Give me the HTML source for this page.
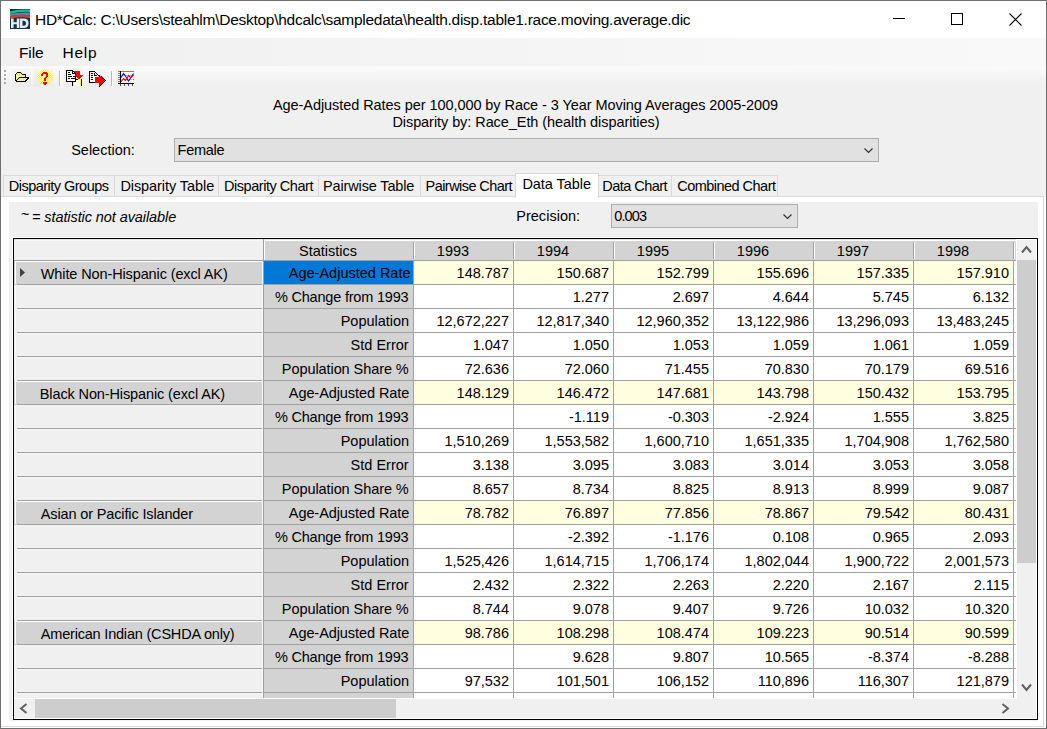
<!DOCTYPE html>
<html><head><meta charset="utf-8"><style>
html,body{margin:0;padding:0;width:1047px;height:729px;overflow:hidden;background:#fff}
div{position:absolute}
.t{font-family:'Liberation Sans',sans-serif;white-space:pre;color:#000}
</style></head><body>
<div style="left:0px;top:0px;width:1047px;height:729px;background:#6e6e6e"></div>
<div style="left:1px;top:1px;width:1045px;height:727px;background:#fff"></div>
<svg style="position:absolute;left:10px;top:9px" width="20" height="20" viewBox="0 0 20 20">
<rect x="0" y="0" width="20" height="20" fill="#0e3350"/>
<path d="M0 2.5 Q9 -0.5 20 0.8 L20 3 Q10 2.2 0 5Z" fill="#1fbf8a"/>
<path d="M0 5 Q10 2.8 20 3.6 L20 6.2 Q10 5.2 0 7.2Z" fill="#4d8fc4"/>
<path d="M0 6.8 Q7 5.8 14 5.6 L20 6.6 L20 9.2 L14 8.2 Q7 8.2 0 9.4Z" fill="#c8442c"/>
<path d="M1 9.5 H3.6 V13.2 H6.8 V9.5 H9.4 V19 H6.8 V15.3 H3.6 V19 H1Z" fill="#e6eaee"/>
<path d="M10 9.5 H14 Q18.6 9.5 18.6 14.25 Q18.6 19 14 19 H10Z M12.5 11.7 V16.8 H13.8 Q16.1 16.8 16.1 14.25 Q16.1 11.7 13.8 11.7Z" fill="#e6eaee" fill-rule="evenodd"/>
</svg>
<div class="t" style="left:35.00px;top:12px;font-size:15.5px;line-height:16px;letter-spacing:-0.269px;">HD*Calc: C:\Users\steahlm\Desktop\hdcalc\sampledata\health.disp.table1.race.moving.average.dic</div>
<div style="left:893px;top:18px;width:12px;height:1px;background:#000"></div>
<div style="left:951px;top:13px;width:12px;height:12px;border:1px solid #000;box-sizing:border-box"></div>
<svg style="position:absolute;left:1009px;top:13px" width="14" height="14" viewBox="0 0 14 14"><path d="M0.5 0.5L12.5 12.5M12.5 0.5L0.5 12.5" stroke="#000" stroke-width="1.1"/></svg>
<div style="left:1px;top:38px;width:1045px;height:28px;background:linear-gradient(to right,#f0f0f0,#f9f9f9)"></div>
<div class="t" style="left:19.00px;top:45px;font-size:15.5px;line-height:16px;letter-spacing:-0.100px;">File</div>
<div class="t" style="left:62.60px;top:45px;font-size:15.5px;line-height:16px;letter-spacing:0.700px;">Help</div>
<div style="left:1px;top:66px;width:1045px;height:23px;background:linear-gradient(to bottom,#fbfbfb,#f3f3f3 60%,#efefef)"></div>
<div style="left:4px;top:70px;width:2px;height:2px;background:#a8a8a8"></div>
<div style="left:4px;top:74px;width:2px;height:2px;background:#a8a8a8"></div>
<div style="left:4px;top:78px;width:2px;height:2px;background:#a8a8a8"></div>
<div style="left:4px;top:82px;width:2px;height:2px;background:#a8a8a8"></div>
<div style="left:1px;top:89px;width:1045px;height:108px;background:#f0f0f0"></div>
<div style="left:12px;top:69px;width:19px;height:18px;background:rgba(0,0,0,0.018)"></div>
<div style="left:34px;top:69px;width:19px;height:18px;background:rgba(0,0,0,0.018)"></div>
<div style="left:64px;top:69px;width:19px;height:18px;background:rgba(0,0,0,0.018)"></div>
<div style="left:87px;top:69px;width:19px;height:18px;background:rgba(0,0,0,0.018)"></div>
<div style="left:116px;top:69px;width:19px;height:18px;background:rgba(0,0,0,0.018)"></div>
<div style="left:59px;top:71px;width:1px;height:15px;background:#b9b9b9"></div>
<div style="left:60px;top:71px;width:1px;height:15px;background:#fff"></div>
<div style="left:111px;top:71px;width:1px;height:15px;background:#b9b9b9"></div>
<div style="left:112px;top:71px;width:1px;height:15px;background:#fff"></div>
<svg style="position:absolute;left:14px;top:71px" width="16" height="12" viewBox="0 0 16 12" shape-rendering="crispEdges">
<defs><pattern id="dy" width="2" height="2" patternUnits="userSpaceOnUse"><rect width="2" height="2" fill="#fff"/><rect width="1" height="1" fill="#ff0"/><rect x="1" y="1" width="1" height="1" fill="#ff0"/></pattern></defs>
<rect x="3" y="2" width="4" height="1" fill="url(#dy)"/><rect x="2" y="3" width="6" height="1" fill="url(#dy)"/><rect x="2" y="4" width="9" height="1" fill="url(#dy)"/><rect x="2" y="5" width="9" height="1" fill="url(#dy)"/><rect x="2" y="6" width="3" height="1" fill="url(#dy)"/><rect x="2" y="7" width="2" height="1" fill="url(#dy)"/><rect x="5" y="7" width="8" height="1" fill="url(#dy)"/><rect x="2" y="8" width="1" height="1" fill="url(#dy)"/><rect x="4" y="8" width="8" height="1" fill="url(#dy)"/><rect x="3" y="9" width="8" height="1" fill="url(#dy)"/><rect x="3" y="1" width="4" height="1" fill="#000"/><rect x="2" y="2" width="1" height="1" fill="#000"/><rect x="7" y="2" width="1" height="1" fill="#000"/><rect x="1" y="3" width="1" height="1" fill="#000"/><rect x="8" y="3" width="4" height="1" fill="#000"/><rect x="1" y="4" width="1" height="1" fill="#000"/><rect x="11" y="4" width="1" height="1" fill="#000"/><rect x="1" y="5" width="1" height="1" fill="#000"/><rect x="11" y="5" width="1" height="1" fill="#000"/><rect x="1" y="6" width="1" height="1" fill="#000"/><rect x="5" y="6" width="10" height="1" fill="#000"/><rect x="1" y="7" width="1" height="1" fill="#000"/><rect x="4" y="7" width="1" height="1" fill="#000"/><rect x="13" y="7" width="2" height="1" fill="#000"/><rect x="1" y="8" width="1" height="1" fill="#000"/><rect x="3" y="8" width="1" height="1" fill="#000"/><rect x="12" y="8" width="2" height="1" fill="#000"/><rect x="1" y="9" width="2" height="1" fill="#000"/><rect x="11" y="9" width="2" height="1" fill="#000"/><rect x="2" y="10" width="10" height="1" fill="#000"/>
</svg>
<svg style="position:absolute;left:37px;top:70px" width="16" height="16" viewBox="0 0 16 16" shape-rendering="crispEdges">
<defs><pattern id="dy2" width="2" height="2" patternUnits="userSpaceOnUse"><rect width="2" height="2" fill="#fff"/><rect width="1" height="1" fill="#ff0"/><rect x="1" y="1" width="1" height="1" fill="#ff0"/></pattern></defs>
<path d="M5 0 H11 V1 H13 V3 H15 V5 H16 V10 H15 V12 H13 V14 H11 V15 H5 V14 H3 V12 H1 V10 H0 V5 H1 V3 H3 V1 H5Z" fill="url(#dy2)"/>
<rect x="6" y="2" width="4" height="1" fill="#f00"/><rect x="5" y="3" width="6" height="1" fill="#f00"/><rect x="4" y="4" width="2" height="1" fill="#f00"/><rect x="9" y="4" width="2" height="1" fill="#f00"/><rect x="4" y="5" width="2" height="1" fill="#f00"/><rect x="9" y="5" width="2" height="1" fill="#f00"/><rect x="9" y="6" width="2" height="1" fill="#f00"/><rect x="8" y="7" width="2" height="1" fill="#f00"/><rect x="7" y="8" width="2" height="1" fill="#f00"/><rect x="7" y="9" width="2" height="1" fill="#f00"/><rect x="7" y="10" width="2" height="1" fill="#f00"/><rect x="6" y="12" width="4" height="1" fill="#f00"/><rect x="6" y="13" width="4" height="1" fill="#f00"/><rect x="7" y="14" width="2" height="1" fill="#f00"/>
</svg>
<svg style="position:absolute;left:64px;top:69px" width="20" height="18" viewBox="0 0 20 18" shape-rendering="crispEdges">
<rect x="3" y="2" width="5" height="1" fill="#fff"/><rect x="3" y="3" width="5" height="1" fill="#fff"/><rect x="9" y="3" width="1" height="1" fill="#fff"/><rect x="3" y="4" width="5" height="1" fill="#fff"/><rect x="3" y="5" width="8" height="1" fill="#fff"/><rect x="3" y="6" width="8" height="1" fill="#fff"/><rect x="3" y="7" width="8" height="1" fill="#fff"/><rect x="3" y="8" width="8" height="1" fill="#fff"/><rect x="3" y="9" width="8" height="1" fill="#fff"/><rect x="3" y="10" width="8" height="1" fill="#fff"/><rect x="3" y="11" width="8" height="1" fill="#fff"/><rect x="12" y="11" width="4" height="1" fill="#fff"/><rect x="12" y="12" width="4" height="1" fill="#fff"/><rect x="10" y="13" width="6" height="1" fill="#fff"/><rect x="10" y="14" width="6" height="1" fill="#fff"/><rect x="10" y="15" width="6" height="1" fill="#fff"/><rect x="10" y="16" width="6" height="1" fill="#fff"/><rect x="14" y="10" width="3" height="1" fill="#ff0"/><rect x="16" y="11" width="1" height="1" fill="#ff0"/><rect x="16" y="12" width="1" height="1" fill="#ff0"/><rect x="9" y="13" width="1" height="1" fill="#ff0"/><rect x="16" y="13" width="1" height="1" fill="#ff0"/><rect x="9" y="14" width="1" height="1" fill="#ff0"/><rect x="16" y="14" width="1" height="1" fill="#ff0"/><rect x="9" y="15" width="1" height="1" fill="#ff0"/><rect x="16" y="15" width="1" height="1" fill="#ff0"/><rect x="9" y="16" width="1" height="1" fill="#ff0"/><rect x="16" y="16" width="1" height="1" fill="#ff0"/><rect x="2" y="1" width="7" height="1" fill="#000"/><rect x="2" y="2" width="1" height="1" fill="#000"/><rect x="8" y="2" width="2" height="1" fill="#000"/><rect x="2" y="3" width="1" height="1" fill="#000"/><rect x="4" y="3" width="2" height="1" fill="#000"/><rect x="8" y="3" width="1" height="1" fill="#000"/><rect x="10" y="3" width="1" height="1" fill="#000"/><rect x="2" y="4" width="1" height="1" fill="#000"/><rect x="8" y="4" width="4" height="1" fill="#000"/><rect x="2" y="5" width="1" height="1" fill="#000"/><rect x="4" y="5" width="3" height="1" fill="#000"/><rect x="11" y="5" width="1" height="1" fill="#000"/><rect x="2" y="6" width="1" height="1" fill="#000"/><rect x="11" y="6" width="1" height="1" fill="#000"/><rect x="2" y="7" width="1" height="1" fill="#000"/><rect x="4" y="7" width="4" height="1" fill="#000"/><rect x="9" y="7" width="2" height="1" fill="#000"/><rect x="11" y="7" width="1" height="1" fill="#000"/><rect x="2" y="8" width="1" height="1" fill="#000"/><rect x="11" y="8" width="1" height="1" fill="#000"/><rect x="2" y="9" width="1" height="1" fill="#000"/><rect x="4" y="9" width="2" height="1" fill="#000"/><rect x="7" y="9" width="4" height="1" fill="#000"/><rect x="11" y="9" width="1" height="1" fill="#000"/><rect x="2" y="10" width="1" height="1" fill="#000"/><rect x="11" y="10" width="3" height="1" fill="#000"/><rect x="17" y="10" width="1" height="1" fill="#000"/><rect x="2" y="11" width="1" height="1" fill="#000"/><rect x="11" y="11" width="1" height="1" fill="#000"/><rect x="17" y="11" width="1" height="1" fill="#000"/><rect x="2" y="12" width="10" height="1" fill="#000"/><rect x="17" y="12" width="1" height="1" fill="#000"/><rect x="8" y="13" width="1" height="1" fill="#000"/><rect x="17" y="13" width="1" height="1" fill="#000"/><rect x="8" y="14" width="1" height="1" fill="#000"/><rect x="17" y="14" width="1" height="1" fill="#000"/><rect x="8" y="15" width="1" height="1" fill="#000"/><rect x="17" y="15" width="1" height="1" fill="#000"/><rect x="8" y="16" width="1" height="1" fill="#000"/><rect x="17" y="16" width="1" height="1" fill="#000"/><rect x="10" y="2" width="6" height="1" fill="#f00"/><rect x="11" y="3" width="5" height="1" fill="#f00"/><rect x="12" y="4" width="4" height="1" fill="#f00"/><rect x="12" y="5" width="4" height="1" fill="#f00"/><rect x="11" y="6" width="8" height="1" fill="#f00"/><rect x="12" y="7" width="6" height="1" fill="#f00"/><rect x="13" y="8" width="4" height="1" fill="#f00"/><rect x="14" y="9" width="2" height="1" fill="#f00"/>
</svg>
<svg style="position:absolute;left:87px;top:69px" width="20" height="19" viewBox="0 0 20 19" shape-rendering="crispEdges">
<rect x="3" y="3" width="5" height="1" fill="#fff"/><rect x="3" y="4" width="6" height="1" fill="#fff"/><rect x="3" y="5" width="7" height="1" fill="#fff"/><rect x="3" y="6" width="8" height="1" fill="#fff"/><rect x="3" y="7" width="9" height="1" fill="#fff"/><rect x="3" y="8" width="10" height="1" fill="#fff"/><rect x="3" y="9" width="5" height="1" fill="#fff"/><rect x="3" y="10" width="5" height="1" fill="#fff"/><rect x="3" y="11" width="5" height="1" fill="#fff"/><rect x="3" y="12" width="5" height="1" fill="#fff"/><rect x="2" y="2" width="6" height="1" fill="#000"/><rect x="2" y="3" width="1" height="1" fill="#000"/><rect x="8" y="3" width="1" height="1" fill="#000"/><rect x="2" y="4" width="1" height="1" fill="#000"/><rect x="4" y="4" width="2" height="1" fill="#000"/><rect x="7" y="4" width="1" height="1" fill="#000"/><rect x="9" y="4" width="1" height="1" fill="#000"/><rect x="2" y="5" width="1" height="1" fill="#000"/><rect x="7" y="5" width="1" height="1" fill="#000"/><rect x="10" y="5" width="1" height="1" fill="#000"/><rect x="2" y="6" width="1" height="1" fill="#000"/><rect x="4" y="6" width="2" height="1" fill="#000"/><rect x="7" y="6" width="3" height="1" fill="#000"/><rect x="11" y="6" width="1" height="1" fill="#000"/><rect x="2" y="7" width="1" height="1" fill="#000"/><rect x="12" y="7" width="1" height="1" fill="#000"/><rect x="2" y="8" width="1" height="1" fill="#000"/><rect x="4" y="8" width="2" height="1" fill="#000"/><rect x="2" y="9" width="1" height="1" fill="#000"/><rect x="2" y="10" width="1" height="1" fill="#000"/><rect x="4" y="10" width="2" height="1" fill="#000"/><rect x="2" y="11" width="1" height="1" fill="#000"/><rect x="2" y="12" width="1" height="1" fill="#000"/><rect x="2" y="13" width="6" height="1" fill="#000"/><rect x="13" y="7" width="1" height="1" fill="#f00"/><rect x="8" y="8" width="7" height="1" fill="#f00"/><rect x="8" y="9" width="8" height="1" fill="#f00"/><rect x="8" y="10" width="9" height="1" fill="#f00"/><rect x="8" y="11" width="10" height="1" fill="#f00"/><rect x="8" y="12" width="9" height="1" fill="#f00"/><rect x="8" y="13" width="8" height="1" fill="#f00"/><rect x="12" y="14" width="3" height="1" fill="#f00"/><rect x="12" y="15" width="2" height="1" fill="#f00"/><rect x="12" y="16" width="1" height="1" fill="#f00"/><rect x="12" y="6" width="1" height="1" fill="#000"/><rect x="14" y="7" width="1" height="1" fill="#000"/><rect x="15" y="8" width="1" height="1" fill="#000"/><rect x="16" y="9" width="1" height="1" fill="#000"/><rect x="17" y="10" width="1" height="1" fill="#000"/><rect x="18" y="11" width="1" height="1" fill="#000"/><rect x="17" y="12" width="1" height="1" fill="#000"/><rect x="16" y="13" width="1" height="1" fill="#000"/><rect x="15" y="14" width="1" height="1" fill="#000"/><rect x="14" y="15" width="1" height="1" fill="#000"/><rect x="13" y="16" width="1" height="1" fill="#000"/><rect x="12" y="17" width="1" height="1" fill="#000"/>
</svg>
<svg style="position:absolute;left:116px;top:69px" width="20" height="19" viewBox="116 69 20 19" shape-rendering="crispEdges">
<rect x="118" y="71" width="16" height="1" fill="#808080"/><rect x="118" y="75" width="16" height="1" fill="#808080"/><rect x="118" y="79" width="16" height="1" fill="#808080"/>
<rect x="118" y="73" width="2" height="1" fill="#808080"/><rect x="118" y="77" width="2" height="1" fill="#808080"/><rect x="118" y="81" width="2" height="1" fill="#808080"/>
<rect x="121" y="72" width="12" height="11" fill="#fff" opacity="0.6"/>
<rect x="120" y="71" width="1" height="13" fill="#000"/><rect x="118" y="83" width="16" height="1" fill="#000"/>
<rect x="120" y="84" width="1" height="2" fill="#555"/><rect x="124" y="84" width="1" height="2" fill="#555"/><rect x="128" y="84" width="1" height="2" fill="#555"/><rect x="132" y="84" width="1" height="2" fill="#555"/>
<polyline points="121,77.5 123.5,73.5 126,77 128.5,81 131,77.5 133.5,73.5" fill="none" stroke="#00f" stroke-width="1.1" shape-rendering="auto"/>
<polyline points="121,82 123.5,78.5 125.5,80.5 128.5,75.5 130.5,77.5 133.5,75.5" fill="none" stroke="#f00" stroke-width="1.1" shape-rendering="auto"/>
</svg>
<div class="t" style="left:273.00px;top:97px;font-size:14.5px;line-height:16px;letter-spacing:-0.067px;">Age-Adjusted Rates per 100,000 by Race - 3 Year Moving Averages 2005-2009</div>
<div class="t" style="left:392.40px;top:114px;font-size:14.5px;line-height:16px;letter-spacing:-0.069px;">Disparity by: Race_Eth (health disparities)</div>
<div class="t" style="left:71.20px;top:142px;font-size:14.5px;line-height:16px;letter-spacing:-0.011px;">Selection:</div>
<div style="left:174px;top:138px;width:705px;height:24px;background:#e1e1e1;border:1px solid #adadad;box-sizing:border-box"></div>
<div class="t" style="left:177.60px;top:142px;font-size:14.5px;line-height:16px;letter-spacing:-0.260px;">Female</div>
<svg style="position:absolute;left:864px;top:148px" width="10" height="6" viewBox="0 0 10 6"><polyline points="0.5,0.5 4.5,4.5 8.5,0.5" fill="none" stroke="#333" stroke-width="1.2"/></svg>
<div style="left:3px;top:175px;width:112px;height:22px;background:#f0f0f0;border:1px solid #d9d9d9;box-sizing:border-box"></div>
<div class="t" style="left:8.80px;top:178px;font-size:14.5px;line-height:16px;letter-spacing:-0.520px;">Disparity Groups</div>
<div style="left:114px;top:175px;width:105px;height:22px;background:#f0f0f0;border:1px solid #d9d9d9;box-sizing:border-box"></div>
<div class="t" style="left:120.40px;top:178px;font-size:14.5px;line-height:16px;letter-spacing:-0.071px;">Disparity Table</div>
<div style="left:218px;top:175px;width:101px;height:22px;background:#f0f0f0;border:1px solid #d9d9d9;box-sizing:border-box"></div>
<div class="t" style="left:224.00px;top:178px;font-size:14.5px;line-height:16px;letter-spacing:-0.457px;">Disparity Chart</div>
<div style="left:318px;top:175px;width:103px;height:22px;background:#f0f0f0;border:1px solid #d9d9d9;box-sizing:border-box"></div>
<div class="t" style="left:323.00px;top:178px;font-size:14.5px;line-height:16px;letter-spacing:-0.138px;">Pairwise Table</div>
<div style="left:420px;top:175px;width:97px;height:22px;background:#f0f0f0;border:1px solid #d9d9d9;box-sizing:border-box"></div>
<div class="t" style="left:425.60px;top:178px;font-size:14.5px;line-height:16px;letter-spacing:-0.562px;">Pairwise Chart</div>
<div style="left:598px;top:175px;width:74px;height:22px;background:#f0f0f0;border:1px solid #d9d9d9;box-sizing:border-box"></div>
<div class="t" style="left:602.30px;top:178px;font-size:14.5px;line-height:16px;letter-spacing:-0.544px;">Data Chart</div>
<div style="left:671px;top:175px;width:107px;height:22px;background:#f0f0f0;border:1px solid #d9d9d9;box-sizing:border-box"></div>
<div class="t" style="left:677.20px;top:178px;font-size:14.5px;line-height:16px;letter-spacing:-0.523px;">Combined Chart</div>
<div style="left:1px;top:196px;width:1043px;height:531px;background:#fff;border-right:1px solid #d9d9d9;border-bottom:1px solid #d9d9d9;border-top:1px solid #d9d9d9;box-sizing:border-box"></div>
<div style="left:515px;top:173px;width:84px;height:25px;background:#fff;border:1px solid #d9d9d9;border-bottom:none;box-sizing:border-box"></div>
<div class="t" style="left:522.40px;top:176px;font-size:14.5px;line-height:16px;letter-spacing:-0.056px;">Data Table</div>
<div style="left:9px;top:202px;width:1029px;height:519px;background:#f0f0f0"></div>
<div class="t" style="left:21.00px;top:206px;font-size:14.5px;line-height:16px;letter-spacing:2.000px;">~</div>
<div class="t" style="left:32.00px;top:209px;font-size:14.5px;line-height:16px;letter-spacing:-0.087px;font-style:italic;">= statistic not available</div>
<div class="t" style="left:516.20px;top:208px;font-size:14.5px;line-height:16px;letter-spacing:0.033px;">Precision:</div>
<div style="left:611px;top:204px;width:187px;height:24px;background:#e1e1e1;border:1px solid #adadad;box-sizing:border-box"></div>
<div class="t" style="left:614.20px;top:208px;font-size:14.5px;line-height:16px;letter-spacing:-0.875px;">0.003</div>
<svg style="position:absolute;left:783px;top:214px" width="10" height="6" viewBox="0 0 10 6"><polyline points="0.5,0.5 4.5,4.5 8.5,0.5" fill="none" stroke="#333" stroke-width="1.2"/></svg>
<div style="left:12px;top:237px;width:1026px;height:483px;background:#fff"></div>
<div style="left:13px;top:238px;width:1025px;height:482px;background:#f0f0f0;border:1px solid #000;box-sizing:border-box"></div>
<div style="left:1014px;top:239px;width:2px;height:459px;background:#fff"></div>
<div style="left:14px;top:239px;width:250px;height:22px;background:#f0f0f0"></div>
<div style="left:14px;top:239px;width:249px;height:1px;background:#e6e6e6"></div>
<div style="left:15px;top:240px;width:247px;height:1px;background:#f7f7f7"></div>
<div style="left:264px;top:239px;width:752px;height:22px;background:#d3d3d3"></div>
<div style="left:264px;top:239px;width:752px;height:1px;background:#e6e6e6"></div>
<div style="left:264px;top:240px;width:752px;height:1px;background:#fff"></div>
<div style="left:14px;top:260px;width:1002px;height:1px;background:#a0a0a0"></div>
<div style="left:263px;top:239px;width:1px;height:459px;background:#a0a0a0"></div>
<div style="left:264px;top:240px;width:1px;height:20px;background:#fff"></div>
<div style="left:413px;top:242px;width:1px;height:17px;background:#a0a0a0"></div>
<div style="left:414px;top:242px;width:1px;height:17px;background:#fff"></div>
<div class="t" style="left:28px;width:600px;text-align:center;top:243px;font-size:14.5px;line-height:16px;">Statistics</div>
<div style="left:513px;top:242px;width:1px;height:17px;background:#a0a0a0"></div>
<div style="left:514px;top:242px;width:1px;height:17px;background:#fff"></div>
<div class="t" style="left:153px;width:600px;text-align:center;top:243px;font-size:14.5px;line-height:16px;">1993</div>
<div style="left:613px;top:242px;width:1px;height:17px;background:#a0a0a0"></div>
<div style="left:614px;top:242px;width:1px;height:17px;background:#fff"></div>
<div class="t" style="left:253px;width:600px;text-align:center;top:243px;font-size:14.5px;line-height:16px;">1994</div>
<div style="left:713px;top:242px;width:1px;height:17px;background:#a0a0a0"></div>
<div style="left:714px;top:242px;width:1px;height:17px;background:#fff"></div>
<div class="t" style="left:353px;width:600px;text-align:center;top:243px;font-size:14.5px;line-height:16px;">1995</div>
<div style="left:813px;top:242px;width:1px;height:17px;background:#a0a0a0"></div>
<div style="left:814px;top:242px;width:1px;height:17px;background:#fff"></div>
<div class="t" style="left:453px;width:600px;text-align:center;top:243px;font-size:14.5px;line-height:16px;">1996</div>
<div style="left:913px;top:242px;width:1px;height:17px;background:#a0a0a0"></div>
<div style="left:914px;top:242px;width:1px;height:17px;background:#fff"></div>
<div class="t" style="left:553px;width:600px;text-align:center;top:243px;font-size:14.5px;line-height:16px;">1997</div>
<div style="left:1013px;top:242px;width:1px;height:17px;background:#a0a0a0"></div>
<div style="left:1014px;top:242px;width:1px;height:17px;background:#fff"></div>
<div class="t" style="left:653px;width:600px;text-align:center;top:243px;font-size:14.5px;line-height:16px;">1998</div>
<div style="left:14px;top:261px;width:249px;height:24px;background:#d3d3d3"></div>
<div style="left:15px;top:261px;width:1px;height:23px;background:#fff"></div>
<div style="left:15px;top:261px;width:247px;height:1px;background:#fff"></div>
<div style="left:262px;top:261px;width:1px;height:23px;background:#f7f7f7"></div>
<div style="left:17px;top:284px;width:245px;height:1px;background:#a0a0a0"></div>
<div class="t" style="left:40.80px;top:266px;font-size:14.5px;line-height:16px;letter-spacing:-0.119px;">White Non-Hispanic (excl AK)</div>
<div style="left:264px;top:261px;width:149px;height:23px;background:#0078d7"></div>
<div class="t" style="left:288.80px;top:265px;font-size:14.5px;line-height:16px;color:#fffletter-spacing:-0.075px;">Age-Adjusted Rate</div>
<div style="left:413px;top:261px;width:1px;height:24px;background:#a0a0a0"></div>
<div style="left:414px;top:261px;width:600px;height:24px;background:#ffffe0"></div>
<div style="left:513px;top:261px;width:1px;height:24px;background:#a0a0a0"></div>
<div class="t" style="left:209px;width:300px;text-align:right;top:265px;font-size:14.5px;line-height:16px;">148.787</div>
<div style="left:613px;top:261px;width:1px;height:24px;background:#a0a0a0"></div>
<div class="t" style="left:309px;width:300px;text-align:right;top:265px;font-size:14.5px;line-height:16px;">150.687</div>
<div style="left:713px;top:261px;width:1px;height:24px;background:#a0a0a0"></div>
<div class="t" style="left:409px;width:300px;text-align:right;top:265px;font-size:14.5px;line-height:16px;">152.799</div>
<div style="left:813px;top:261px;width:1px;height:24px;background:#a0a0a0"></div>
<div class="t" style="left:509px;width:300px;text-align:right;top:265px;font-size:14.5px;line-height:16px;">155.696</div>
<div style="left:913px;top:261px;width:1px;height:24px;background:#a0a0a0"></div>
<div class="t" style="left:609px;width:300px;text-align:right;top:265px;font-size:14.5px;line-height:16px;">157.335</div>
<div style="left:1013px;top:261px;width:1px;height:24px;background:#a0a0a0"></div>
<div class="t" style="left:709px;width:300px;text-align:right;top:265px;font-size:14.5px;line-height:16px;">157.910</div>
<div style="left:264px;top:284px;width:752px;height:1px;background:#a0a0a0"></div>
<div style="left:14px;top:285px;width:249px;height:24px;background:#f0f0f0"></div>
<div style="left:15px;top:285px;width:1px;height:23px;background:#f7f7f7"></div>
<div style="left:15px;top:285px;width:247px;height:1px;background:#f7f7f7"></div>
<div style="left:262px;top:285px;width:1px;height:23px;background:#f7f7f7"></div>
<div style="left:17px;top:308px;width:245px;height:1px;background:#a0a0a0"></div>
<div style="left:264px;top:285px;width:149px;height:24px;background:#d3d3d3"></div>
<div class="t" style="left:274.90px;top:289px;font-size:14.5px;line-height:16px;letter-spacing:-0.194px;">% Change from 1993</div>
<div style="left:413px;top:285px;width:1px;height:24px;background:#a0a0a0"></div>
<div style="left:414px;top:285px;width:600px;height:24px;background:#fff"></div>
<div style="left:513px;top:285px;width:1px;height:24px;background:#a0a0a0"></div>
<div style="left:613px;top:285px;width:1px;height:24px;background:#a0a0a0"></div>
<div class="t" style="left:309px;width:300px;text-align:right;top:289px;font-size:14.5px;line-height:16px;">1.277</div>
<div style="left:713px;top:285px;width:1px;height:24px;background:#a0a0a0"></div>
<div class="t" style="left:409px;width:300px;text-align:right;top:289px;font-size:14.5px;line-height:16px;">2.697</div>
<div style="left:813px;top:285px;width:1px;height:24px;background:#a0a0a0"></div>
<div class="t" style="left:509px;width:300px;text-align:right;top:289px;font-size:14.5px;line-height:16px;">4.644</div>
<div style="left:913px;top:285px;width:1px;height:24px;background:#a0a0a0"></div>
<div class="t" style="left:609px;width:300px;text-align:right;top:289px;font-size:14.5px;line-height:16px;">5.745</div>
<div style="left:1013px;top:285px;width:1px;height:24px;background:#a0a0a0"></div>
<div class="t" style="left:709px;width:300px;text-align:right;top:289px;font-size:14.5px;line-height:16px;">6.132</div>
<div style="left:264px;top:308px;width:752px;height:1px;background:#a0a0a0"></div>
<div style="left:14px;top:309px;width:249px;height:24px;background:#f0f0f0"></div>
<div style="left:15px;top:309px;width:1px;height:23px;background:#f7f7f7"></div>
<div style="left:15px;top:309px;width:247px;height:1px;background:#f7f7f7"></div>
<div style="left:262px;top:309px;width:1px;height:23px;background:#f7f7f7"></div>
<div style="left:17px;top:332px;width:245px;height:1px;background:#a0a0a0"></div>
<div style="left:264px;top:309px;width:149px;height:24px;background:#d3d3d3"></div>
<div class="t" style="left:340.70px;top:313px;font-size:14.5px;line-height:16px;letter-spacing:-0.011px;">Population</div>
<div style="left:413px;top:309px;width:1px;height:24px;background:#a0a0a0"></div>
<div style="left:414px;top:309px;width:600px;height:24px;background:#fff"></div>
<div style="left:513px;top:309px;width:1px;height:24px;background:#a0a0a0"></div>
<div class="t" style="left:209px;width:300px;text-align:right;top:313px;font-size:14.5px;line-height:16px;">12,672,227</div>
<div style="left:613px;top:309px;width:1px;height:24px;background:#a0a0a0"></div>
<div class="t" style="left:309px;width:300px;text-align:right;top:313px;font-size:14.5px;line-height:16px;">12,817,340</div>
<div style="left:713px;top:309px;width:1px;height:24px;background:#a0a0a0"></div>
<div class="t" style="left:409px;width:300px;text-align:right;top:313px;font-size:14.5px;line-height:16px;">12,960,352</div>
<div style="left:813px;top:309px;width:1px;height:24px;background:#a0a0a0"></div>
<div class="t" style="left:509px;width:300px;text-align:right;top:313px;font-size:14.5px;line-height:16px;">13,122,986</div>
<div style="left:913px;top:309px;width:1px;height:24px;background:#a0a0a0"></div>
<div class="t" style="left:609px;width:300px;text-align:right;top:313px;font-size:14.5px;line-height:16px;">13,296,093</div>
<div style="left:1013px;top:309px;width:1px;height:24px;background:#a0a0a0"></div>
<div class="t" style="left:709px;width:300px;text-align:right;top:313px;font-size:14.5px;line-height:16px;">13,483,245</div>
<div style="left:264px;top:332px;width:752px;height:1px;background:#a0a0a0"></div>
<div style="left:14px;top:333px;width:249px;height:24px;background:#f0f0f0"></div>
<div style="left:15px;top:333px;width:1px;height:23px;background:#f7f7f7"></div>
<div style="left:15px;top:333px;width:247px;height:1px;background:#f7f7f7"></div>
<div style="left:262px;top:333px;width:1px;height:23px;background:#f7f7f7"></div>
<div style="left:17px;top:356px;width:245px;height:1px;background:#a0a0a0"></div>
<div style="left:264px;top:333px;width:149px;height:24px;background:#d3d3d3"></div>
<div class="t" style="left:350.60px;top:337px;font-size:14.5px;line-height:16px;letter-spacing:0.000px;">Std Error</div>
<div style="left:413px;top:333px;width:1px;height:24px;background:#a0a0a0"></div>
<div style="left:414px;top:333px;width:600px;height:24px;background:#fff"></div>
<div style="left:513px;top:333px;width:1px;height:24px;background:#a0a0a0"></div>
<div class="t" style="left:209px;width:300px;text-align:right;top:337px;font-size:14.5px;line-height:16px;">1.047</div>
<div style="left:613px;top:333px;width:1px;height:24px;background:#a0a0a0"></div>
<div class="t" style="left:309px;width:300px;text-align:right;top:337px;font-size:14.5px;line-height:16px;">1.050</div>
<div style="left:713px;top:333px;width:1px;height:24px;background:#a0a0a0"></div>
<div class="t" style="left:409px;width:300px;text-align:right;top:337px;font-size:14.5px;line-height:16px;">1.053</div>
<div style="left:813px;top:333px;width:1px;height:24px;background:#a0a0a0"></div>
<div class="t" style="left:509px;width:300px;text-align:right;top:337px;font-size:14.5px;line-height:16px;">1.059</div>
<div style="left:913px;top:333px;width:1px;height:24px;background:#a0a0a0"></div>
<div class="t" style="left:609px;width:300px;text-align:right;top:337px;font-size:14.5px;line-height:16px;">1.061</div>
<div style="left:1013px;top:333px;width:1px;height:24px;background:#a0a0a0"></div>
<div class="t" style="left:709px;width:300px;text-align:right;top:337px;font-size:14.5px;line-height:16px;">1.059</div>
<div style="left:264px;top:356px;width:752px;height:1px;background:#a0a0a0"></div>
<div style="left:14px;top:357px;width:249px;height:24px;background:#f0f0f0"></div>
<div style="left:15px;top:357px;width:1px;height:23px;background:#f7f7f7"></div>
<div style="left:15px;top:357px;width:247px;height:1px;background:#f7f7f7"></div>
<div style="left:262px;top:357px;width:1px;height:23px;background:#f7f7f7"></div>
<div style="left:17px;top:380px;width:245px;height:1px;background:#a0a0a0"></div>
<div style="left:264px;top:357px;width:149px;height:24px;background:#d3d3d3"></div>
<div class="t" style="left:281.80px;top:361px;font-size:14.5px;line-height:16px;letter-spacing:-0.071px;">Population Share %</div>
<div style="left:413px;top:357px;width:1px;height:24px;background:#a0a0a0"></div>
<div style="left:414px;top:357px;width:600px;height:24px;background:#fff"></div>
<div style="left:513px;top:357px;width:1px;height:24px;background:#a0a0a0"></div>
<div class="t" style="left:209px;width:300px;text-align:right;top:361px;font-size:14.5px;line-height:16px;">72.636</div>
<div style="left:613px;top:357px;width:1px;height:24px;background:#a0a0a0"></div>
<div class="t" style="left:309px;width:300px;text-align:right;top:361px;font-size:14.5px;line-height:16px;">72.060</div>
<div style="left:713px;top:357px;width:1px;height:24px;background:#a0a0a0"></div>
<div class="t" style="left:409px;width:300px;text-align:right;top:361px;font-size:14.5px;line-height:16px;">71.455</div>
<div style="left:813px;top:357px;width:1px;height:24px;background:#a0a0a0"></div>
<div class="t" style="left:509px;width:300px;text-align:right;top:361px;font-size:14.5px;line-height:16px;">70.830</div>
<div style="left:913px;top:357px;width:1px;height:24px;background:#a0a0a0"></div>
<div class="t" style="left:609px;width:300px;text-align:right;top:361px;font-size:14.5px;line-height:16px;">70.179</div>
<div style="left:1013px;top:357px;width:1px;height:24px;background:#a0a0a0"></div>
<div class="t" style="left:709px;width:300px;text-align:right;top:361px;font-size:14.5px;line-height:16px;">69.516</div>
<div style="left:264px;top:380px;width:752px;height:1px;background:#a0a0a0"></div>
<div style="left:14px;top:381px;width:249px;height:24px;background:#d3d3d3"></div>
<div style="left:15px;top:381px;width:1px;height:23px;background:#fff"></div>
<div style="left:15px;top:381px;width:247px;height:1px;background:#fff"></div>
<div style="left:262px;top:381px;width:1px;height:23px;background:#f7f7f7"></div>
<div style="left:17px;top:404px;width:245px;height:1px;background:#a0a0a0"></div>
<div class="t" style="left:39.80px;top:386px;font-size:14.5px;line-height:16px;letter-spacing:-0.122px;">Black Non-Hispanic (excl AK)</div>
<div style="left:264px;top:381px;width:149px;height:24px;background:#d3d3d3"></div>
<div class="t" style="left:288.80px;top:385px;font-size:14.5px;line-height:16px;letter-spacing:-0.075px;">Age-Adjusted Rate</div>
<div style="left:413px;top:381px;width:1px;height:24px;background:#a0a0a0"></div>
<div style="left:414px;top:381px;width:600px;height:24px;background:#ffffe0"></div>
<div style="left:513px;top:381px;width:1px;height:24px;background:#a0a0a0"></div>
<div class="t" style="left:209px;width:300px;text-align:right;top:385px;font-size:14.5px;line-height:16px;">148.129</div>
<div style="left:613px;top:381px;width:1px;height:24px;background:#a0a0a0"></div>
<div class="t" style="left:309px;width:300px;text-align:right;top:385px;font-size:14.5px;line-height:16px;">146.472</div>
<div style="left:713px;top:381px;width:1px;height:24px;background:#a0a0a0"></div>
<div class="t" style="left:409px;width:300px;text-align:right;top:385px;font-size:14.5px;line-height:16px;">147.681</div>
<div style="left:813px;top:381px;width:1px;height:24px;background:#a0a0a0"></div>
<div class="t" style="left:509px;width:300px;text-align:right;top:385px;font-size:14.5px;line-height:16px;">143.798</div>
<div style="left:913px;top:381px;width:1px;height:24px;background:#a0a0a0"></div>
<div class="t" style="left:609px;width:300px;text-align:right;top:385px;font-size:14.5px;line-height:16px;">150.432</div>
<div style="left:1013px;top:381px;width:1px;height:24px;background:#a0a0a0"></div>
<div class="t" style="left:709px;width:300px;text-align:right;top:385px;font-size:14.5px;line-height:16px;">153.795</div>
<div style="left:264px;top:404px;width:752px;height:1px;background:#a0a0a0"></div>
<div style="left:14px;top:405px;width:249px;height:24px;background:#f0f0f0"></div>
<div style="left:15px;top:405px;width:1px;height:23px;background:#f7f7f7"></div>
<div style="left:15px;top:405px;width:247px;height:1px;background:#f7f7f7"></div>
<div style="left:262px;top:405px;width:1px;height:23px;background:#f7f7f7"></div>
<div style="left:17px;top:428px;width:245px;height:1px;background:#a0a0a0"></div>
<div style="left:264px;top:405px;width:149px;height:24px;background:#d3d3d3"></div>
<div class="t" style="left:274.90px;top:409px;font-size:14.5px;line-height:16px;letter-spacing:-0.194px;">% Change from 1993</div>
<div style="left:413px;top:405px;width:1px;height:24px;background:#a0a0a0"></div>
<div style="left:414px;top:405px;width:600px;height:24px;background:#fff"></div>
<div style="left:513px;top:405px;width:1px;height:24px;background:#a0a0a0"></div>
<div style="left:613px;top:405px;width:1px;height:24px;background:#a0a0a0"></div>
<div class="t" style="left:309px;width:300px;text-align:right;top:409px;font-size:14.5px;line-height:16px;">-1.119</div>
<div style="left:713px;top:405px;width:1px;height:24px;background:#a0a0a0"></div>
<div class="t" style="left:409px;width:300px;text-align:right;top:409px;font-size:14.5px;line-height:16px;">-0.303</div>
<div style="left:813px;top:405px;width:1px;height:24px;background:#a0a0a0"></div>
<div class="t" style="left:509px;width:300px;text-align:right;top:409px;font-size:14.5px;line-height:16px;">-2.924</div>
<div style="left:913px;top:405px;width:1px;height:24px;background:#a0a0a0"></div>
<div class="t" style="left:609px;width:300px;text-align:right;top:409px;font-size:14.5px;line-height:16px;">1.555</div>
<div style="left:1013px;top:405px;width:1px;height:24px;background:#a0a0a0"></div>
<div class="t" style="left:709px;width:300px;text-align:right;top:409px;font-size:14.5px;line-height:16px;">3.825</div>
<div style="left:264px;top:428px;width:752px;height:1px;background:#a0a0a0"></div>
<div style="left:14px;top:429px;width:249px;height:24px;background:#f0f0f0"></div>
<div style="left:15px;top:429px;width:1px;height:23px;background:#f7f7f7"></div>
<div style="left:15px;top:429px;width:247px;height:1px;background:#f7f7f7"></div>
<div style="left:262px;top:429px;width:1px;height:23px;background:#f7f7f7"></div>
<div style="left:17px;top:452px;width:245px;height:1px;background:#a0a0a0"></div>
<div style="left:264px;top:429px;width:149px;height:24px;background:#d3d3d3"></div>
<div class="t" style="left:340.70px;top:433px;font-size:14.5px;line-height:16px;letter-spacing:-0.011px;">Population</div>
<div style="left:413px;top:429px;width:1px;height:24px;background:#a0a0a0"></div>
<div style="left:414px;top:429px;width:600px;height:24px;background:#fff"></div>
<div style="left:513px;top:429px;width:1px;height:24px;background:#a0a0a0"></div>
<div class="t" style="left:209px;width:300px;text-align:right;top:433px;font-size:14.5px;line-height:16px;">1,510,269</div>
<div style="left:613px;top:429px;width:1px;height:24px;background:#a0a0a0"></div>
<div class="t" style="left:309px;width:300px;text-align:right;top:433px;font-size:14.5px;line-height:16px;">1,553,582</div>
<div style="left:713px;top:429px;width:1px;height:24px;background:#a0a0a0"></div>
<div class="t" style="left:409px;width:300px;text-align:right;top:433px;font-size:14.5px;line-height:16px;">1,600,710</div>
<div style="left:813px;top:429px;width:1px;height:24px;background:#a0a0a0"></div>
<div class="t" style="left:509px;width:300px;text-align:right;top:433px;font-size:14.5px;line-height:16px;">1,651,335</div>
<div style="left:913px;top:429px;width:1px;height:24px;background:#a0a0a0"></div>
<div class="t" style="left:609px;width:300px;text-align:right;top:433px;font-size:14.5px;line-height:16px;">1,704,908</div>
<div style="left:1013px;top:429px;width:1px;height:24px;background:#a0a0a0"></div>
<div class="t" style="left:709px;width:300px;text-align:right;top:433px;font-size:14.5px;line-height:16px;">1,762,580</div>
<div style="left:264px;top:452px;width:752px;height:1px;background:#a0a0a0"></div>
<div style="left:14px;top:453px;width:249px;height:24px;background:#f0f0f0"></div>
<div style="left:15px;top:453px;width:1px;height:23px;background:#f7f7f7"></div>
<div style="left:15px;top:453px;width:247px;height:1px;background:#f7f7f7"></div>
<div style="left:262px;top:453px;width:1px;height:23px;background:#f7f7f7"></div>
<div style="left:17px;top:476px;width:245px;height:1px;background:#a0a0a0"></div>
<div style="left:264px;top:453px;width:149px;height:24px;background:#d3d3d3"></div>
<div class="t" style="left:350.60px;top:457px;font-size:14.5px;line-height:16px;letter-spacing:0.000px;">Std Error</div>
<div style="left:413px;top:453px;width:1px;height:24px;background:#a0a0a0"></div>
<div style="left:414px;top:453px;width:600px;height:24px;background:#fff"></div>
<div style="left:513px;top:453px;width:1px;height:24px;background:#a0a0a0"></div>
<div class="t" style="left:209px;width:300px;text-align:right;top:457px;font-size:14.5px;line-height:16px;">3.138</div>
<div style="left:613px;top:453px;width:1px;height:24px;background:#a0a0a0"></div>
<div class="t" style="left:309px;width:300px;text-align:right;top:457px;font-size:14.5px;line-height:16px;">3.095</div>
<div style="left:713px;top:453px;width:1px;height:24px;background:#a0a0a0"></div>
<div class="t" style="left:409px;width:300px;text-align:right;top:457px;font-size:14.5px;line-height:16px;">3.083</div>
<div style="left:813px;top:453px;width:1px;height:24px;background:#a0a0a0"></div>
<div class="t" style="left:509px;width:300px;text-align:right;top:457px;font-size:14.5px;line-height:16px;">3.014</div>
<div style="left:913px;top:453px;width:1px;height:24px;background:#a0a0a0"></div>
<div class="t" style="left:609px;width:300px;text-align:right;top:457px;font-size:14.5px;line-height:16px;">3.053</div>
<div style="left:1013px;top:453px;width:1px;height:24px;background:#a0a0a0"></div>
<div class="t" style="left:709px;width:300px;text-align:right;top:457px;font-size:14.5px;line-height:16px;">3.058</div>
<div style="left:264px;top:476px;width:752px;height:1px;background:#a0a0a0"></div>
<div style="left:14px;top:477px;width:249px;height:24px;background:#f0f0f0"></div>
<div style="left:15px;top:477px;width:1px;height:23px;background:#f7f7f7"></div>
<div style="left:15px;top:477px;width:247px;height:1px;background:#f7f7f7"></div>
<div style="left:262px;top:477px;width:1px;height:23px;background:#f7f7f7"></div>
<div style="left:17px;top:500px;width:245px;height:1px;background:#a0a0a0"></div>
<div style="left:264px;top:477px;width:149px;height:24px;background:#d3d3d3"></div>
<div class="t" style="left:281.80px;top:481px;font-size:14.5px;line-height:16px;letter-spacing:-0.071px;">Population Share %</div>
<div style="left:413px;top:477px;width:1px;height:24px;background:#a0a0a0"></div>
<div style="left:414px;top:477px;width:600px;height:24px;background:#fff"></div>
<div style="left:513px;top:477px;width:1px;height:24px;background:#a0a0a0"></div>
<div class="t" style="left:209px;width:300px;text-align:right;top:481px;font-size:14.5px;line-height:16px;">8.657</div>
<div style="left:613px;top:477px;width:1px;height:24px;background:#a0a0a0"></div>
<div class="t" style="left:309px;width:300px;text-align:right;top:481px;font-size:14.5px;line-height:16px;">8.734</div>
<div style="left:713px;top:477px;width:1px;height:24px;background:#a0a0a0"></div>
<div class="t" style="left:409px;width:300px;text-align:right;top:481px;font-size:14.5px;line-height:16px;">8.825</div>
<div style="left:813px;top:477px;width:1px;height:24px;background:#a0a0a0"></div>
<div class="t" style="left:509px;width:300px;text-align:right;top:481px;font-size:14.5px;line-height:16px;">8.913</div>
<div style="left:913px;top:477px;width:1px;height:24px;background:#a0a0a0"></div>
<div class="t" style="left:609px;width:300px;text-align:right;top:481px;font-size:14.5px;line-height:16px;">8.999</div>
<div style="left:1013px;top:477px;width:1px;height:24px;background:#a0a0a0"></div>
<div class="t" style="left:709px;width:300px;text-align:right;top:481px;font-size:14.5px;line-height:16px;">9.087</div>
<div style="left:264px;top:500px;width:752px;height:1px;background:#a0a0a0"></div>
<div style="left:14px;top:501px;width:249px;height:24px;background:#d3d3d3"></div>
<div style="left:15px;top:501px;width:1px;height:23px;background:#fff"></div>
<div style="left:15px;top:501px;width:247px;height:1px;background:#fff"></div>
<div style="left:262px;top:501px;width:1px;height:23px;background:#f7f7f7"></div>
<div style="left:17px;top:524px;width:245px;height:1px;background:#a0a0a0"></div>
<div class="t" style="left:40.80px;top:506px;font-size:14.5px;line-height:16px;letter-spacing:-0.138px;">Asian or Pacific Islander</div>
<div style="left:264px;top:501px;width:149px;height:24px;background:#d3d3d3"></div>
<div class="t" style="left:288.80px;top:505px;font-size:14.5px;line-height:16px;letter-spacing:-0.075px;">Age-Adjusted Rate</div>
<div style="left:413px;top:501px;width:1px;height:24px;background:#a0a0a0"></div>
<div style="left:414px;top:501px;width:600px;height:24px;background:#ffffe0"></div>
<div style="left:513px;top:501px;width:1px;height:24px;background:#a0a0a0"></div>
<div class="t" style="left:209px;width:300px;text-align:right;top:505px;font-size:14.5px;line-height:16px;">78.782</div>
<div style="left:613px;top:501px;width:1px;height:24px;background:#a0a0a0"></div>
<div class="t" style="left:309px;width:300px;text-align:right;top:505px;font-size:14.5px;line-height:16px;">76.897</div>
<div style="left:713px;top:501px;width:1px;height:24px;background:#a0a0a0"></div>
<div class="t" style="left:409px;width:300px;text-align:right;top:505px;font-size:14.5px;line-height:16px;">77.856</div>
<div style="left:813px;top:501px;width:1px;height:24px;background:#a0a0a0"></div>
<div class="t" style="left:509px;width:300px;text-align:right;top:505px;font-size:14.5px;line-height:16px;">78.867</div>
<div style="left:913px;top:501px;width:1px;height:24px;background:#a0a0a0"></div>
<div class="t" style="left:609px;width:300px;text-align:right;top:505px;font-size:14.5px;line-height:16px;">79.542</div>
<div style="left:1013px;top:501px;width:1px;height:24px;background:#a0a0a0"></div>
<div class="t" style="left:709px;width:300px;text-align:right;top:505px;font-size:14.5px;line-height:16px;">80.431</div>
<div style="left:264px;top:524px;width:752px;height:1px;background:#a0a0a0"></div>
<div style="left:14px;top:525px;width:249px;height:24px;background:#f0f0f0"></div>
<div style="left:15px;top:525px;width:1px;height:23px;background:#f7f7f7"></div>
<div style="left:15px;top:525px;width:247px;height:1px;background:#f7f7f7"></div>
<div style="left:262px;top:525px;width:1px;height:23px;background:#f7f7f7"></div>
<div style="left:17px;top:548px;width:245px;height:1px;background:#a0a0a0"></div>
<div style="left:264px;top:525px;width:149px;height:24px;background:#d3d3d3"></div>
<div class="t" style="left:274.90px;top:529px;font-size:14.5px;line-height:16px;letter-spacing:-0.194px;">% Change from 1993</div>
<div style="left:413px;top:525px;width:1px;height:24px;background:#a0a0a0"></div>
<div style="left:414px;top:525px;width:600px;height:24px;background:#fff"></div>
<div style="left:513px;top:525px;width:1px;height:24px;background:#a0a0a0"></div>
<div style="left:613px;top:525px;width:1px;height:24px;background:#a0a0a0"></div>
<div class="t" style="left:309px;width:300px;text-align:right;top:529px;font-size:14.5px;line-height:16px;">-2.392</div>
<div style="left:713px;top:525px;width:1px;height:24px;background:#a0a0a0"></div>
<div class="t" style="left:409px;width:300px;text-align:right;top:529px;font-size:14.5px;line-height:16px;">-1.176</div>
<div style="left:813px;top:525px;width:1px;height:24px;background:#a0a0a0"></div>
<div class="t" style="left:509px;width:300px;text-align:right;top:529px;font-size:14.5px;line-height:16px;">0.108</div>
<div style="left:913px;top:525px;width:1px;height:24px;background:#a0a0a0"></div>
<div class="t" style="left:609px;width:300px;text-align:right;top:529px;font-size:14.5px;line-height:16px;">0.965</div>
<div style="left:1013px;top:525px;width:1px;height:24px;background:#a0a0a0"></div>
<div class="t" style="left:709px;width:300px;text-align:right;top:529px;font-size:14.5px;line-height:16px;">2.093</div>
<div style="left:264px;top:548px;width:752px;height:1px;background:#a0a0a0"></div>
<div style="left:14px;top:549px;width:249px;height:24px;background:#f0f0f0"></div>
<div style="left:15px;top:549px;width:1px;height:23px;background:#f7f7f7"></div>
<div style="left:15px;top:549px;width:247px;height:1px;background:#f7f7f7"></div>
<div style="left:262px;top:549px;width:1px;height:23px;background:#f7f7f7"></div>
<div style="left:17px;top:572px;width:245px;height:1px;background:#a0a0a0"></div>
<div style="left:264px;top:549px;width:149px;height:24px;background:#d3d3d3"></div>
<div class="t" style="left:340.70px;top:553px;font-size:14.5px;line-height:16px;letter-spacing:-0.011px;">Population</div>
<div style="left:413px;top:549px;width:1px;height:24px;background:#a0a0a0"></div>
<div style="left:414px;top:549px;width:600px;height:24px;background:#fff"></div>
<div style="left:513px;top:549px;width:1px;height:24px;background:#a0a0a0"></div>
<div class="t" style="left:209px;width:300px;text-align:right;top:553px;font-size:14.5px;line-height:16px;">1,525,426</div>
<div style="left:613px;top:549px;width:1px;height:24px;background:#a0a0a0"></div>
<div class="t" style="left:309px;width:300px;text-align:right;top:553px;font-size:14.5px;line-height:16px;">1,614,715</div>
<div style="left:713px;top:549px;width:1px;height:24px;background:#a0a0a0"></div>
<div class="t" style="left:409px;width:300px;text-align:right;top:553px;font-size:14.5px;line-height:16px;">1,706,174</div>
<div style="left:813px;top:549px;width:1px;height:24px;background:#a0a0a0"></div>
<div class="t" style="left:509px;width:300px;text-align:right;top:553px;font-size:14.5px;line-height:16px;">1,802,044</div>
<div style="left:913px;top:549px;width:1px;height:24px;background:#a0a0a0"></div>
<div class="t" style="left:609px;width:300px;text-align:right;top:553px;font-size:14.5px;line-height:16px;">1,900,722</div>
<div style="left:1013px;top:549px;width:1px;height:24px;background:#a0a0a0"></div>
<div class="t" style="left:709px;width:300px;text-align:right;top:553px;font-size:14.5px;line-height:16px;">2,001,573</div>
<div style="left:264px;top:572px;width:752px;height:1px;background:#a0a0a0"></div>
<div style="left:14px;top:573px;width:249px;height:24px;background:#f0f0f0"></div>
<div style="left:15px;top:573px;width:1px;height:23px;background:#f7f7f7"></div>
<div style="left:15px;top:573px;width:247px;height:1px;background:#f7f7f7"></div>
<div style="left:262px;top:573px;width:1px;height:23px;background:#f7f7f7"></div>
<div style="left:17px;top:596px;width:245px;height:1px;background:#a0a0a0"></div>
<div style="left:264px;top:573px;width:149px;height:24px;background:#d3d3d3"></div>
<div class="t" style="left:350.60px;top:577px;font-size:14.5px;line-height:16px;letter-spacing:0.000px;">Std Error</div>
<div style="left:413px;top:573px;width:1px;height:24px;background:#a0a0a0"></div>
<div style="left:414px;top:573px;width:600px;height:24px;background:#fff"></div>
<div style="left:513px;top:573px;width:1px;height:24px;background:#a0a0a0"></div>
<div class="t" style="left:209px;width:300px;text-align:right;top:577px;font-size:14.5px;line-height:16px;">2.432</div>
<div style="left:613px;top:573px;width:1px;height:24px;background:#a0a0a0"></div>
<div class="t" style="left:309px;width:300px;text-align:right;top:577px;font-size:14.5px;line-height:16px;">2.322</div>
<div style="left:713px;top:573px;width:1px;height:24px;background:#a0a0a0"></div>
<div class="t" style="left:409px;width:300px;text-align:right;top:577px;font-size:14.5px;line-height:16px;">2.263</div>
<div style="left:813px;top:573px;width:1px;height:24px;background:#a0a0a0"></div>
<div class="t" style="left:509px;width:300px;text-align:right;top:577px;font-size:14.5px;line-height:16px;">2.220</div>
<div style="left:913px;top:573px;width:1px;height:24px;background:#a0a0a0"></div>
<div class="t" style="left:609px;width:300px;text-align:right;top:577px;font-size:14.5px;line-height:16px;">2.167</div>
<div style="left:1013px;top:573px;width:1px;height:24px;background:#a0a0a0"></div>
<div class="t" style="left:709px;width:300px;text-align:right;top:577px;font-size:14.5px;line-height:16px;">2.115</div>
<div style="left:264px;top:596px;width:752px;height:1px;background:#a0a0a0"></div>
<div style="left:14px;top:597px;width:249px;height:24px;background:#f0f0f0"></div>
<div style="left:15px;top:597px;width:1px;height:23px;background:#f7f7f7"></div>
<div style="left:15px;top:597px;width:247px;height:1px;background:#f7f7f7"></div>
<div style="left:262px;top:597px;width:1px;height:23px;background:#f7f7f7"></div>
<div style="left:17px;top:620px;width:245px;height:1px;background:#a0a0a0"></div>
<div style="left:264px;top:597px;width:149px;height:24px;background:#d3d3d3"></div>
<div class="t" style="left:281.80px;top:601px;font-size:14.5px;line-height:16px;letter-spacing:-0.071px;">Population Share %</div>
<div style="left:413px;top:597px;width:1px;height:24px;background:#a0a0a0"></div>
<div style="left:414px;top:597px;width:600px;height:24px;background:#fff"></div>
<div style="left:513px;top:597px;width:1px;height:24px;background:#a0a0a0"></div>
<div class="t" style="left:209px;width:300px;text-align:right;top:601px;font-size:14.5px;line-height:16px;">8.744</div>
<div style="left:613px;top:597px;width:1px;height:24px;background:#a0a0a0"></div>
<div class="t" style="left:309px;width:300px;text-align:right;top:601px;font-size:14.5px;line-height:16px;">9.078</div>
<div style="left:713px;top:597px;width:1px;height:24px;background:#a0a0a0"></div>
<div class="t" style="left:409px;width:300px;text-align:right;top:601px;font-size:14.5px;line-height:16px;">9.407</div>
<div style="left:813px;top:597px;width:1px;height:24px;background:#a0a0a0"></div>
<div class="t" style="left:509px;width:300px;text-align:right;top:601px;font-size:14.5px;line-height:16px;">9.726</div>
<div style="left:913px;top:597px;width:1px;height:24px;background:#a0a0a0"></div>
<div class="t" style="left:609px;width:300px;text-align:right;top:601px;font-size:14.5px;line-height:16px;">10.032</div>
<div style="left:1013px;top:597px;width:1px;height:24px;background:#a0a0a0"></div>
<div class="t" style="left:709px;width:300px;text-align:right;top:601px;font-size:14.5px;line-height:16px;">10.320</div>
<div style="left:264px;top:620px;width:752px;height:1px;background:#a0a0a0"></div>
<div style="left:14px;top:621px;width:249px;height:24px;background:#d3d3d3"></div>
<div style="left:15px;top:621px;width:1px;height:23px;background:#fff"></div>
<div style="left:15px;top:621px;width:247px;height:1px;background:#fff"></div>
<div style="left:262px;top:621px;width:1px;height:23px;background:#f7f7f7"></div>
<div style="left:17px;top:644px;width:245px;height:1px;background:#a0a0a0"></div>
<div class="t" style="left:40.80px;top:626px;font-size:14.5px;line-height:16px;letter-spacing:-0.196px;">American Indian (CSHDA only)</div>
<div style="left:264px;top:621px;width:149px;height:24px;background:#d3d3d3"></div>
<div class="t" style="left:288.80px;top:625px;font-size:14.5px;line-height:16px;letter-spacing:-0.075px;">Age-Adjusted Rate</div>
<div style="left:413px;top:621px;width:1px;height:24px;background:#a0a0a0"></div>
<div style="left:414px;top:621px;width:600px;height:24px;background:#ffffe0"></div>
<div style="left:513px;top:621px;width:1px;height:24px;background:#a0a0a0"></div>
<div class="t" style="left:209px;width:300px;text-align:right;top:625px;font-size:14.5px;line-height:16px;">98.786</div>
<div style="left:613px;top:621px;width:1px;height:24px;background:#a0a0a0"></div>
<div class="t" style="left:309px;width:300px;text-align:right;top:625px;font-size:14.5px;line-height:16px;">108.298</div>
<div style="left:713px;top:621px;width:1px;height:24px;background:#a0a0a0"></div>
<div class="t" style="left:409px;width:300px;text-align:right;top:625px;font-size:14.5px;line-height:16px;">108.474</div>
<div style="left:813px;top:621px;width:1px;height:24px;background:#a0a0a0"></div>
<div class="t" style="left:509px;width:300px;text-align:right;top:625px;font-size:14.5px;line-height:16px;">109.223</div>
<div style="left:913px;top:621px;width:1px;height:24px;background:#a0a0a0"></div>
<div class="t" style="left:609px;width:300px;text-align:right;top:625px;font-size:14.5px;line-height:16px;">90.514</div>
<div style="left:1013px;top:621px;width:1px;height:24px;background:#a0a0a0"></div>
<div class="t" style="left:709px;width:300px;text-align:right;top:625px;font-size:14.5px;line-height:16px;">90.599</div>
<div style="left:264px;top:644px;width:752px;height:1px;background:#a0a0a0"></div>
<div style="left:14px;top:645px;width:249px;height:24px;background:#f0f0f0"></div>
<div style="left:15px;top:645px;width:1px;height:23px;background:#f7f7f7"></div>
<div style="left:15px;top:645px;width:247px;height:1px;background:#f7f7f7"></div>
<div style="left:262px;top:645px;width:1px;height:23px;background:#f7f7f7"></div>
<div style="left:17px;top:668px;width:245px;height:1px;background:#a0a0a0"></div>
<div style="left:264px;top:645px;width:149px;height:24px;background:#d3d3d3"></div>
<div class="t" style="left:274.90px;top:649px;font-size:14.5px;line-height:16px;letter-spacing:-0.194px;">% Change from 1993</div>
<div style="left:413px;top:645px;width:1px;height:24px;background:#a0a0a0"></div>
<div style="left:414px;top:645px;width:600px;height:24px;background:#fff"></div>
<div style="left:513px;top:645px;width:1px;height:24px;background:#a0a0a0"></div>
<div style="left:613px;top:645px;width:1px;height:24px;background:#a0a0a0"></div>
<div class="t" style="left:309px;width:300px;text-align:right;top:649px;font-size:14.5px;line-height:16px;">9.628</div>
<div style="left:713px;top:645px;width:1px;height:24px;background:#a0a0a0"></div>
<div class="t" style="left:409px;width:300px;text-align:right;top:649px;font-size:14.5px;line-height:16px;">9.807</div>
<div style="left:813px;top:645px;width:1px;height:24px;background:#a0a0a0"></div>
<div class="t" style="left:509px;width:300px;text-align:right;top:649px;font-size:14.5px;line-height:16px;">10.565</div>
<div style="left:913px;top:645px;width:1px;height:24px;background:#a0a0a0"></div>
<div class="t" style="left:609px;width:300px;text-align:right;top:649px;font-size:14.5px;line-height:16px;">-8.374</div>
<div style="left:1013px;top:645px;width:1px;height:24px;background:#a0a0a0"></div>
<div class="t" style="left:709px;width:300px;text-align:right;top:649px;font-size:14.5px;line-height:16px;">-8.288</div>
<div style="left:264px;top:668px;width:752px;height:1px;background:#a0a0a0"></div>
<div style="left:14px;top:669px;width:249px;height:24px;background:#f0f0f0"></div>
<div style="left:15px;top:669px;width:1px;height:23px;background:#f7f7f7"></div>
<div style="left:15px;top:669px;width:247px;height:1px;background:#f7f7f7"></div>
<div style="left:262px;top:669px;width:1px;height:23px;background:#f7f7f7"></div>
<div style="left:17px;top:692px;width:245px;height:1px;background:#a0a0a0"></div>
<div style="left:264px;top:669px;width:149px;height:24px;background:#d3d3d3"></div>
<div class="t" style="left:340.70px;top:673px;font-size:14.5px;line-height:16px;letter-spacing:-0.011px;">Population</div>
<div style="left:413px;top:669px;width:1px;height:24px;background:#a0a0a0"></div>
<div style="left:414px;top:669px;width:600px;height:24px;background:#fff"></div>
<div style="left:513px;top:669px;width:1px;height:24px;background:#a0a0a0"></div>
<div class="t" style="left:209px;width:300px;text-align:right;top:673px;font-size:14.5px;line-height:16px;">97,532</div>
<div style="left:613px;top:669px;width:1px;height:24px;background:#a0a0a0"></div>
<div class="t" style="left:309px;width:300px;text-align:right;top:673px;font-size:14.5px;line-height:16px;">101,501</div>
<div style="left:713px;top:669px;width:1px;height:24px;background:#a0a0a0"></div>
<div class="t" style="left:409px;width:300px;text-align:right;top:673px;font-size:14.5px;line-height:16px;">106,152</div>
<div style="left:813px;top:669px;width:1px;height:24px;background:#a0a0a0"></div>
<div class="t" style="left:509px;width:300px;text-align:right;top:673px;font-size:14.5px;line-height:16px;">110,896</div>
<div style="left:913px;top:669px;width:1px;height:24px;background:#a0a0a0"></div>
<div class="t" style="left:609px;width:300px;text-align:right;top:673px;font-size:14.5px;line-height:16px;">116,307</div>
<div style="left:1013px;top:669px;width:1px;height:24px;background:#a0a0a0"></div>
<div class="t" style="left:709px;width:300px;text-align:right;top:673px;font-size:14.5px;line-height:16px;">121,879</div>
<div style="left:264px;top:692px;width:752px;height:1px;background:#a0a0a0"></div>
<div style="left:14px;top:693px;width:249px;height:5px;background:#f0f0f0"></div>
<div style="left:15px;top:693px;width:1px;height:5px;background:#f7f7f7"></div>
<div style="left:15px;top:693px;width:247px;height:1px;background:#f7f7f7"></div>
<div style="left:262px;top:693px;width:1px;height:5px;background:#f7f7f7"></div>
<div style="left:264px;top:693px;width:149px;height:5px;background:#d3d3d3"></div>
<div style="left:413px;top:693px;width:1px;height:5px;background:#a0a0a0"></div>
<div style="left:414px;top:693px;width:600px;height:5px;background:#fff"></div>
<div style="left:513px;top:693px;width:1px;height:5px;background:#a0a0a0"></div>
<div style="left:613px;top:693px;width:1px;height:5px;background:#a0a0a0"></div>
<div style="left:713px;top:693px;width:1px;height:5px;background:#a0a0a0"></div>
<div style="left:813px;top:693px;width:1px;height:5px;background:#a0a0a0"></div>
<div style="left:913px;top:693px;width:1px;height:5px;background:#a0a0a0"></div>
<div style="left:1013px;top:693px;width:1px;height:5px;background:#a0a0a0"></div>
<svg style="position:absolute;left:20px;top:268px" width="6" height="10" viewBox="0 0 6 10"><path d="M0 0 L5 4.5 L0 9 Z" fill="#404040"/></svg>
<div style="left:1016px;top:239px;width:1px;height:459px;background:#fff"></div>
<div style="left:1017px;top:239px;width:19px;height:1px;background:#fff"></div>
<div style="left:1017px;top:240px;width:19px;height:458px;background:#f0f0f0"></div>
<div style="left:1036px;top:239px;width:1px;height:480px;background:#fff"></div>
<div style="left:1017px;top:260px;width:19px;height:303px;background:#cdcdcd"></div>
<div style="left:14px;top:698px;width:1003px;height:1px;background:#fff"></div>
<div style="left:14px;top:699px;width:1022px;height:19px;background:#f0f0f0"></div>
<div style="left:14px;top:718px;width:1023px;height:1px;background:#fff"></div>
<div style="left:35px;top:699px;width:361px;height:19px;background:#cdcdcd"></div>
<svg style="position:absolute;left:1021px;top:245px" width="11" height="9" viewBox="0 0 11 9"><polyline points="1,7.5 5.5,2 10,7.5" fill="none" stroke="#606060" stroke-width="2"/></svg>
<svg style="position:absolute;left:1021px;top:683px" width="11" height="9" viewBox="0 0 11 9"><polyline points="1,1.5 5.5,7 10,1.5" fill="none" stroke="#606060" stroke-width="2"/></svg>
<svg style="position:absolute;left:19px;top:703px" width="9" height="11" viewBox="0 0 9 11"><polyline points="7.5,1 2,5.5 7.5,10" fill="none" stroke="#606060" stroke-width="2"/></svg>
<svg style="position:absolute;left:1001px;top:703px" width="9" height="11" viewBox="0 0 9 11"><polyline points="1.5,1 7,5.5 1.5,10" fill="none" stroke="#606060" stroke-width="2"/></svg>
</body></html>
